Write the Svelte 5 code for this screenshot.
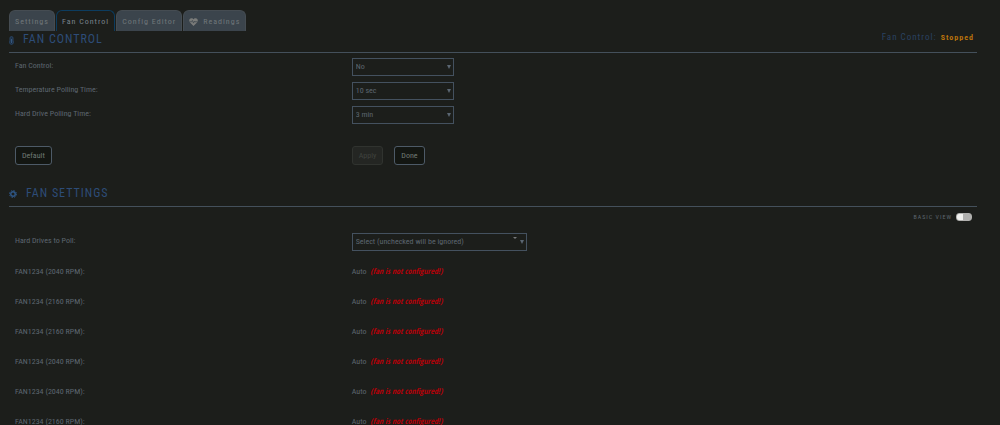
<script lang="ts">
  type option = {
    id: string;
    label: string;
    values: string[];
  };

  type fan = {
    name: string;
    rpm: number;
  };

  const tabs = ["Settings", "Fan Control", "Config Editor", "Readings"];
  let activeTab = $state("Fan Control");
  let advanced = $state(false);

  const options: option[] = [
    { id: "fan", label: "Fan Control:", values: ["No", "Yes"] },
    {
      id: "temp-poll",
      label: "Temperature Polling Time:",
      values: ["10 sec", "20 sec", "30 sec"],
    },
    {
      id: "hd-poll",
      label: "Hard Drive Polling Time:",
      values: ["3 min", "4 min", "5 min"],
    },
  ];

  const fans: fan[] = [2040, 2160, 2160, 2040, 2040, 2160].map((rpm) => ({
    name: "FAN1234",
    rpm,
  }));
</script>

<main>
  <nav>
    {#each tabs as tab}
      <button
        class="tab"
        class:active={tab === activeTab}
        onclick={() => (activeTab = tab)}
      >
        {#if tab === "Readings"}
          <svg width="9" height="8" viewBox="0 0 20 18" aria-hidden="true">
            <path
              d="M10 18 2 10C-1 7 0 1 5 .5 7.500 .3 9 1.500 10 3 11 1.500 12.500 .3 15 .5 20 1 21 7 18 10Z"
              fill="#7b7c7a"
            />
            <path
              d="M1 8.500h5l1.500-3 2.500 6 2-4.500 1 1.500h6"
              fill="none"
              stroke="#3b444c"
              stroke-width="1.600"
            />
          </svg>
        {/if}
        {tab}
      </button>
    {/each}
  </nav>

  <header>
    <svg class="icon" width="5" height="9" viewBox="0 0 10 18" aria-hidden="true">
      <path
        d="M2 10V4a3 3 0 0 1 6 0v6a4 4 0 1 1-6 0Z"
        fill="#1e3046"
        stroke="#2a4564"
        stroke-width="2"
      />
      <path d="M5 6v8" stroke="#35577c" stroke-width="2" />
    </svg>
    <h2>FAN CONTROL</h2>
    <p class="status">Fan Control: <span>Stopped</span></p>
  </header>

  <form onsubmit={(e) => e.preventDefault()}>
    {#each options as { id, label, values }}
      <div class="row">
        <label for={id}>{label}</label>
        <select {id}>
          {#each values as value}
            <option>{value}</option>
          {/each}
        </select>
      </div>
    {/each}
    <div class="row buttons">
      <div><button type="button">Default</button></div>
      <div class="actions">
        <button type="submit" disabled>Apply</button>
        <button type="button">Done</button>
      </div>
    </div>
  </form>

  <header class="second">
    <svg class="icon" width="8" height="8" viewBox="0 0 16 16" aria-hidden="true">
      <circle cx="8" cy="8" r="4.500" fill="none" stroke="#2f5685" stroke-width="3" />
      <circle
        cx="8"
        cy="8"
        r="7"
        fill="none"
        stroke="#2f5685"
        stroke-width="2"
        stroke-dasharray="3 2.500"
      />
    </svg>
    <h2>FAN SETTINGS</h2>
  </header>

  <label class="view">
    {advanced ? "ADVANCED VIEW" : "BASIC VIEW"}
    <input type="checkbox" bind:checked={advanced} />
  </label>

  <div class="row drives">
    <label for="drives">Hard Drives to Poll:</label>
    <div class="picker">
      <select id="drives">
        <option>Select (unchecked will be ignored)</option>
      </select>
      <i></i>
    </div>
  </div>

  {#each fans as { name, rpm }}
    <div class="row fan">
      <span>{name} ({rpm} RPM):</span>
      <span>Auto <em>(fan is not configured!)</em></span>
    </div>
  {/each}
</main>

<style>
  :global(body) {
    background: #1c1e1b;
    overflow-x: hidden;
  }
  main {
    padding: 10px 23px 0 9px;
    color: #5c6670;
    font: 8px/12px "Roboto Condensed", Roboto, sans-serif;
  }
  button,
  select {
    box-sizing: border-box;
    color: inherit;
    font: inherit;
  }
  nav {
    display: flex;
    gap: 1px;
  }
  .tab {
    display: flex;
    align-items: center;
    gap: 5px;
    height: 21px;
    padding: 1px 5px 0;
    border: 1px solid #454c52;
    border-bottom: 0;
    border-radius: 6px 6px 0 0;
    background: #3b444c;
    color: #70777a;
    letter-spacing: 1px;
  }
  .active {
    border-color: #0c3c5f;
    background: #1c1e1b;
    color: #7a838c;
  }
  header {
    display: flex;
    align-items: center;
    height: 21px;
    border-bottom: 1px solid #44505b;
  }
  .icon {
    flex: none;
    margin: 0 9px 3px 0;
  }
  h2 {
    margin: 0 0 5px;
    color: #2d4c78;
    font-size: 12px;
    font-weight: 400;
    letter-spacing: 1px;
  }
  .status {
    margin: 0 3px 8px auto;
    color: #2a4262;
    font-size: 9px;
    letter-spacing: 1px;
  }
  .status span {
    margin-left: 1px;
    color: #b8720c;
    font-size: 8px;
    font-weight: 700;
  }
  form {
    padding-top: 5px;
  }
  .row {
    display: grid;
    grid-template-columns: 35% 1fr;
    align-items: start;
    padding-left: 6px;
    margin-bottom: 7px;
  }
  .row label {
    padding-top: 2px;
  }
  select {
    width: 102px;
    height: 18px;
    margin-bottom: -1px;
    padding: 0 3px;
    border: 1px solid #44515f;
    border-radius: 0;
    appearance: none;
    background: url("data:image/svg+xml,%3Csvg xmlns='http://www.w3.org/2000/svg' width='4' height='4'%3E%3Cpath d='M0 0h4L2 4z' fill='%235a6672'/%3E%3C/svg%3E")
      no-repeat right 2px center;
  }
  .buttons {
    margin: 23px 0 0;
  }
  .buttons button {
    height: 19px;
    padding: 0 6px;
    border: 1px solid #4d5a67;
    border-radius: 3px;
    background: #131612;
    color: #707a74;
  }
  .actions {
    display: flex;
    gap: 11px;
  }
  .buttons button:disabled {
    border-color: #30332f;
    background: #242623;
    color: #3f423e;
  }
  .second {
    margin-top: 20px;
  }
  .view {
    display: flex;
    justify-content: flex-end;
    align-items: center;
    gap: 4px;
    height: 19px;
    padding-right: 5px;
    font-size: 6px;
    letter-spacing: 1px;
  }
  .view input {
    box-sizing: border-box;
    width: 16px;
    height: 8px;
    margin: 0;
    border: 1px solid #b0b0ae;
    border-radius: 3px;
    appearance: none;
    background: linear-gradient(90deg, #f0f0ee 45%, #b0b0ae 45%);
  }
  .view input:checked {
    background: linear-gradient(90deg, #486dba 55%, #f0f0ee 55%);
  }
  .drives {
    margin: 7px 0 16px;
  }
  .picker {
    position: relative;
    width: 175px;
    height: 17px;
  }
  .picker select {
    width: 100%;
  }
  .picker i {
    position: absolute;
    top: 4px;
    right: 10px;
    border: 2px solid transparent;
    border-top-color: #77797a;
  }
  .fan {
    height: 12px;
    margin-bottom: 18px;
  }
  em {
    margin-left: 2px;
    color: #b80008;
    font-family: "Open Sans Condensed", "Open Sans", sans-serif;
    line-height: 1;
  }
</style>
